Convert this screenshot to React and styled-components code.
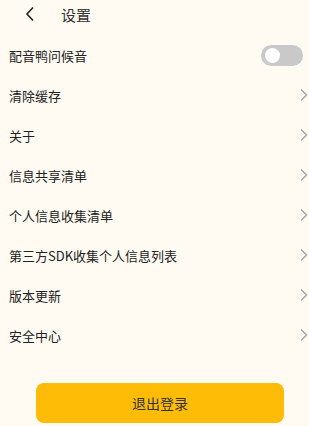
import React, { useState } from 'react';
import styled, { createGlobalStyle } from 'styled-components';

const GlobalStyle = createGlobalStyle`
  html, body {
    margin: 0;
    padding: 0;
    background: #fffaf2;
  }
  body {
    font-family: "Noto Sans CJK SC", "Noto Sans", sans-serif;
  }
`;

const Page = styled.div`
  width: 309px;
  height: 426px;
  overflow: hidden;
  display: flex;
  flex-direction: column;
  background: #fffaf2;
`;

const Header = styled.div`
  height: 28px;
  display: flex;
  align-items: center;
  padding-left: 25px;
  gap: 25px;
  margin-bottom: 7px;
`;

const BackButton = styled.button`
  border: none;
  background: none;
  padding: 0;
  width: 11px;
  height: 16px;
  display: flex;
  align-items: center;
  cursor: pointer;
`;

const Title = styled.h1`
  margin: 0;
  font-size: 15px;
  font-weight: 400;
  color: #333;
`;

const List = styled.div`
  display: flex;
  flex-direction: column;
`;

const Row = styled.div`
  height: 40px;
  display: flex;
  align-items: center;
  justify-content: space-between;
  padding-left: 9px;
  padding-right: ${p => (p.$toggle ? '6px' : '1px')};
  font-size: 13px;
  color: #222;
`;

const Switch = styled.button`
  width: 42px;
  height: 21px;
  border-radius: 11px;
  border: none;
  padding: 2px;
  background: ${p => (p.$on ? '#febc06' : '#c9c9c9')};
  display: flex;
  justify-content: ${p => (p.$on ? 'flex-end' : 'flex-start')};
  align-items: center;
  cursor: pointer;
`;

const Knob = styled.span`
  width: 15px;
  height: 15px;
  border-radius: 50%;
  background: #fff;
  margin-left: 2px;
`;

const Footer = styled.div`
  display: flex;
  padding-left: 36px;
  margin-top: 28px;
`;

const LogoutButton = styled.button`
  width: 248px;
  height: 40px;
  border: none;
  border-radius: 8px;
  background: #febc06;
  color: #333;
  font-size: 14px;
  font-family: "Noto Sans CJK SC", "Noto Sans", sans-serif;
  cursor: pointer;
`;

const Chevron = () => (
  <svg width="9" height="14" viewBox="0 0 9 14">
    <path d="M2 1.5 L7.5 7 L2 12.5" fill="none" stroke="#a3a3a3" strokeWidth="1.4" />
  </svg>
);

const items = [
  '清除缓存',
  '关于',
  '信息共享清单',
  '个人信息收集清单',
  '第三方SDK收集个人信息列表',
  '版本更新',
  '安全中心',
];

const App = () => {
  const [greeting, setGreeting] = useState(false);

  return (
    <Page>
      <GlobalStyle />
      <Header>
        <BackButton>
          <svg width="10" height="16" viewBox="0 0 10 16">
            <path d="M8 1.5 L2 8 L8 14.5" fill="none" stroke="#222" strokeWidth="1.6" />
          </svg>
        </BackButton>
        <Title>设置</Title>
      </Header>
      <List>
        <Row $toggle>
          <span>配音鸭问候音</span>
          <Switch $on={greeting} onClick={() => setGreeting(!greeting)}>
            <Knob />
          </Switch>
        </Row>
        {items.map(label => (
          <Row key={label}>
            <span>{label}</span>
            <Chevron />
          </Row>
        ))}
      </List>
      <Footer>
        <LogoutButton>退出登录</LogoutButton>
      </Footer>
    </Page>
  );
};

export default App;
